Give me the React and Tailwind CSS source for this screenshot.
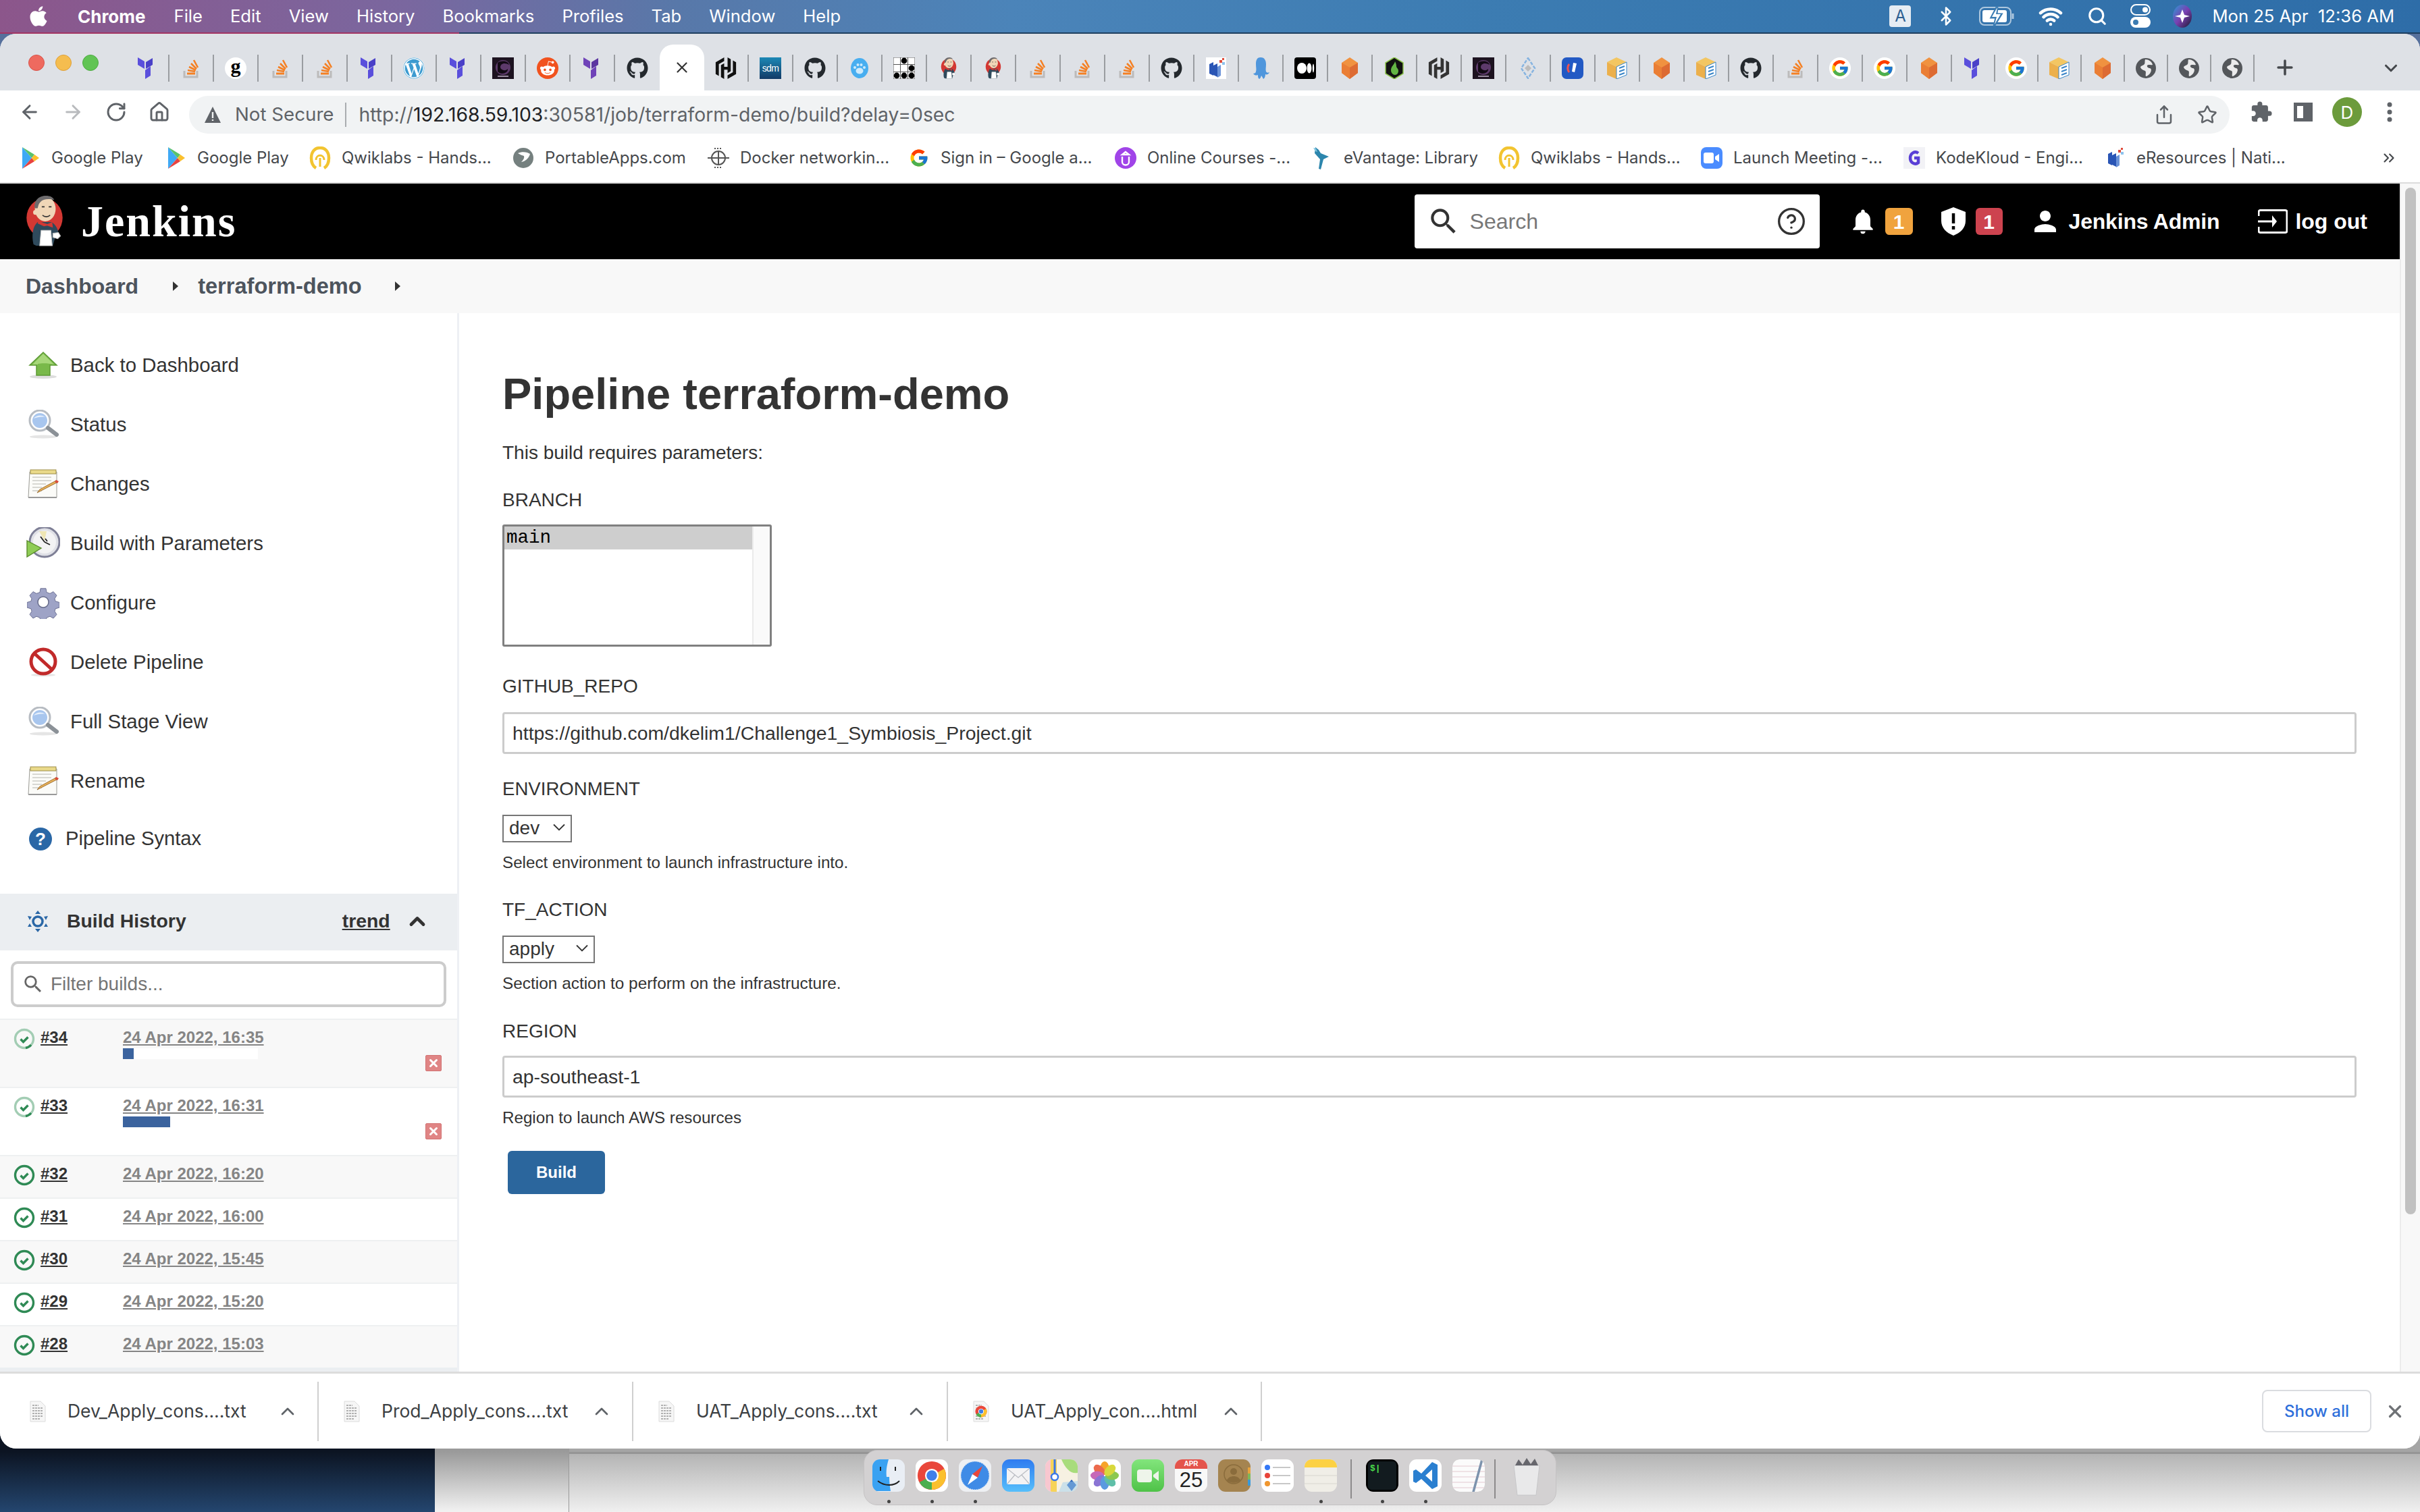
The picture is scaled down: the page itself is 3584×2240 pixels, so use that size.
import React from "react";
import { FaGithub, FaApple, FaWordpress, FaRedditAlien } from "react-icons/fa";
import { FcGoogle } from "react-icons/fc";
import { SiHashicorp } from "react-icons/si";
import { MdNotifications, MdPerson, MdSearch, MdExtension } from "react-icons/md";
import { ArrowLeft, ArrowRight, RotateCw, Home, Share, Star, Search, CircleHelp, Bluetooth, Wifi, X, Plus, ChevronDown, ChevronUp, ChevronsRight } from "lucide-react";

const Tf = ({ dark }) => (
  <svg width="32" height="32" viewBox="0 0 32 32">
    <g fill={dark ? "#6f43b8" : "#5a4fdc"}>
      <path d="M3 0l10 6v11L3 11z" />
      <path d="M15 7l10-6v10l-10 6z" fill={dark ? "#5c36a0" : "#4a40c8"} />
      <path d="M14 19l8-6v14l-8 5z" />
    </g>
  </svg>
);
const So = () => (
  <svg width="32" height="32" viewBox="0 0 32 32" fill="none">
    <path d="M6 20v9h19v-9" stroke="#bcbbbb" strokeWidth="3" />
    <path d="M10 24h12" stroke="#f48024" strokeWidth="3" />
    <path d="M11 19l11 2M13 14l10 5M16 9l8 8M20 4l6 11" stroke="#f48024" strokeWidth="2.6" />
  </svg>
);
const GLetter = () => (
  <div className="w-[32px] h-[32px] rounded-full bg-white flex items-center justify-center font-['Liberation_Serif',serif] font-bold text-[30px] leading-none text-black pb-[6px]">g</div>
);
const Wp = () => <div className="w-[32px] h-[32px] rounded-full bg-white flex items-center justify-center"><FaWordpress size={32} color="#3d9bd0" /></div>;
const DarkSq = () => (
  <svg width="32" height="32" viewBox="0 0 32 32">
    <rect width="32" height="32" fill="#1d1320" />
    <circle cx="16" cy="15" r="11" fill="#5d3a6b" />
    <path d="M8 8c6-4 15-3 17 3-5-3-12-3-13 3 0 5 8 7 11 3 1 6-10 10-15 4" fill="#120a14" />
    <rect x="8" y="27" width="16" height="2" fill="#9a8aa0" />
  </svg>
);
const Reddit = () => <div className="w-[32px] h-[32px] rounded-full bg-[#f1521e] flex items-center justify-center"><FaRedditAlien size={24} color="#fff" /></div>;
const Gh = () => <FaGithub size={32} color="#24292e" />;
const Hashi = ({ c = "#111" }) => <SiHashicorp size={32} color={c} />;
const Sdm = () => (
  <div className="w-[32px] h-[32px] bg-[linear-gradient(180deg,#1c88b5,#123a66)] flex items-center justify-center text-white text-[14px] font-['Liberation_Sans',sans-serif] leading-none tracking-tighter">sdm</div>
);
const Paw = () => (
  <svg width="32" height="32" viewBox="0 0 32 32">
    <ellipse cx="16" cy="16" rx="13" ry="15" fill="#48aef0" />
    <g fill="#cfeafb"><ellipse cx="16" cy="20" rx="5.5" ry="4.5" /><circle cx="9" cy="15" r="2" /><circle cx="13.5" cy="11" r="2" /><circle cx="18.5" cy="11" r="2" /><circle cx="23" cy="15" r="2" /></g>
  </svg>
);
const Dots = () => (
  <svg width="32" height="32" viewBox="0 0 32 32">
    <rect width="32" height="32" fill="#fff" stroke="#555" />
    <path d="M0 10.5h32M0 21.5h32M10.5 0v32M21.5 0v32" stroke="#555" strokeWidth="1" />
    <g fill="#000"><circle cx="16" cy="5" r="4.4" /><circle cx="27" cy="16" r="4.4" /><circle cx="5" cy="27" r="4.4" /><circle cx="16" cy="27" r="4.4" /><circle cx="27" cy="27" r="4.4" /></g>
  </svg>
);
const Jenk = ({ w = 26, h = 32 }) => (
  <svg width={w} height={h} viewBox="0 0 54 74">
    <ellipse cx="27" cy="32" rx="26" ry="28" fill="#d33833" />
    <path d="M11 70c-3-13-1-26 6-32l20 0c6 3 10 11 11 20l-6 3-3 11H15z" fill="#2f4a5c" />
    <ellipse cx="28" cy="19" rx="15" ry="18" fill="#f0d6b7" />
    <path d="M13 18C11 7 19 0 29 0c6 0 10 2 12 6-7-2-16-2-20 3-3 3-3 6-4 9z" fill="#6d6b6d" />
    <circle cx="14" cy="24" r="3.5" fill="#f0d6b7" />
    <path d="M23 16h4M33 16h4M24 28c3 3 8 3 11 0" stroke="#333" strokeWidth="1.6" fill="none" />
    <path d="M17 40l9 4 5-1 8 3-1-8-7 3-6-2-7-3z" fill="#d33833" />
    <path d="M22 50h14l2 22H20z" fill="#fff" stroke="#ccc" />
    <path d="M39 54l8-1 3 5-4 4-7-2z" fill="#fff" stroke="#bbb" />
  </svg>
);
const BlueDoc = () => (
  <svg width="32" height="32" viewBox="0 0 32 32">
    <rect x="1" width="30" height="32" fill="#fff" />
    <path d="M6 10l6-3v20l-6-3zM12 12l6-3v20l-6-3z" fill="#2a55b5" />
    <path d="M18 14l5-3v16l-5 3z" fill="#6b93d8" />
    <rect x="21" y="4" width="4" height="4" fill="#e04a3a" /><rect x="25" y="1" width="3" height="3" fill="#e04a3a" /><rect x="25" y="7" width="4" height="4" fill="#8cc3ee" />
  </svg>
);
const Octo = () => (
  <svg width="32" height="32" viewBox="0 0 32 32" fill="#4f96dc">
    <path d="M16 0c6 0 8 5 8 10 0 5-1 8 0 11 1 2 3 2 5 1-1 3-4 4-6 3 0 3-1 6-3 7-1-2-2-4-3-5-1 2-1 4-3 5-2-1-2-4-2-6-2 1-5 1-7-2 2 0 4-1 4-3 1-3 0-6 0-11C9 5 10 0 16 0z" />
  </svg>
);
const Med = () => (
  <svg width="32" height="32" viewBox="0 0 32 32">
    <rect width="32" height="32" rx="4" fill="#000" />
    <ellipse cx="11" cy="16" rx="7" ry="8" fill="#fff" /><ellipse cx="22" cy="16" rx="3.4" ry="7.5" fill="#fff" /><ellipse cx="28" cy="16" rx="1.2" ry="6.5" fill="#fff" />
  </svg>
);
const Hex = () => (
  <svg width="32" height="32" viewBox="0 0 32 32">
    <path d="M16 0l12 8v15L16 32 4 23V8z" fill="#f09240" />
    <path d="M16 15l12-7v15L16 32z" fill="#dd6b33" />
    <path d="M16 15L4 8v15l12 9z" fill="#ea7e35" />
  </svg>
);
const GreenHex = () => (
  <svg width="32" height="32" viewBox="0 0 32 32">
    <path d="M16 0l13 8v16L16 32 3 24V8z" fill="#111" stroke="#8bc34a" strokeWidth="1.5" />
    <path d="M17 6c-1 5-6 7-6 13 0 4 3 7 6 7 3 0 5-3 5-6 0-4-3-4-3-7 0-3-1-5-2-7z" fill="#63b544" />
  </svg>
);
const Diamond = () => (
  <svg width="32" height="32" viewBox="0 0 32 32" fill="none">
    <path d="M16 1l10 15-10 15L6 16z" stroke="#87b4e0" strokeWidth="2.5" strokeDasharray="5 2" />
    <path d="M16 11l5 5-5 5-5-5z" fill="#bcbcbc" />
  </svg>
);
const BlueSq = () => (
  <svg width="32" height="32" viewBox="0 0 32 32">
    <rect width="32" height="32" rx="7" fill="#2259c4" />
    <path d="M11 10c-3 3-3 9 0 12" stroke="#ef5350" strokeWidth="3" fill="none" />
    <path d="M17 8l5 1-3 13-4-1z" fill="#fff" />
  </svg>
);
const Box = () => (
  <svg width="32" height="32" viewBox="0 0 32 32">
    <path d="M15 0l15 7-15 7L1 7z" fill="#f3c662" />
    <path d="M1 7l14 7v18L1 26z" fill="#ecb04c" />
    <path d="M15 14l15-7v19l-15 6z" fill="#fff" stroke="#3a86c8" strokeWidth="1" />
    <path d="M19 16l8-3M19 21l8-3M19 26l8-3" stroke="#3a86c8" strokeWidth="2" />
  </svg>
);
const Globe = () => (
  <svg width="32" height="32" viewBox="0 0 32 32">
    <circle cx="16" cy="16" r="15" fill="#54575b" />
    <path d="M15 3c5 0 10 3 11 8-3 1-6-1-8 1-1 2 2 4 4 4 3 1 2 5 0 8-2 2-4 4-6 4-1-3 1-6-1-8-3-1-7-3-7-6 2-2 4-2 6-4 1-2 0-5 1-7z" fill="#f3f3f4" opacity=".95" />
  </svg>
);
const Gg = () => <div className="w-[32px] h-[32px] rounded-full bg-white flex items-center justify-center"><FcGoogle size={28} /></div>;

const tabs = [
  <Tf />, <So />, <GLetter />, <So />, <So />, <Tf />, <Wp />, <Tf />, <DarkSq />, <Reddit />, <Tf dark />, <Gh />, "active",
  <Hashi />, <Sdm />, <Gh />, <Paw />, <Dots />, <Jenk />, <Jenk />, <So />, <So />, <So />, <Gh />, <BlueDoc />, <Octo />, <Med />, <Hex />, <GreenHex />, <Hashi c="#333" />, <DarkSq />, <Diamond />, <BlueSq />, <Box />, <Hex />, <Box />, <Gh />, <So />, <Gg />, <Gg />, <Hex />, <Tf />, <Gg />, <Box />, <Hex />, <Globe />, <Globe />, <Globe />,
];

const GPlay = () => (
  <svg width="32" height="34" viewBox="0 0 32 34">
    <path d="M5 1v32l14-16z" fill="#3fa9f5" />
    <path d="M5 1l18 11-4 5z" fill="#5ac26b" />
    <path d="M5 33l18-11-4-5z" fill="#e8423f" />
    <path d="M23 12l7 5-7 5-4-5z" fill="#fbc02d" />
  </svg>
);
const Qwik = () => (
  <svg width="32" height="34" viewBox="0 0 32 34" fill="none">
    <path d="M10 32C5 29 3 24 3 17 3 8 8 2 16 2s13 6 13 15c0 7-2 12-7 15" stroke="#f2c430" strokeWidth="4.5" />
    <path d="M16 30V17M10 20c0-9 12-9 12 0" stroke="#f2c430" strokeWidth="3" />
  </svg>
);
const Portable = () => (
  <svg width="32" height="32" viewBox="0 0 32 32">
    <circle cx="16" cy="16" r="15" fill="#75807f" />
    <path d="M8 9c6-3 14-2 18 1-2 7-7 11-13 12 3-3 5-6 4-9-3-1-6-2-9-4z" fill="#fff" />
  </svg>
);
const Docker = () => (
  <svg width="32" height="32" viewBox="0 0 32 32" fill="none" stroke="#555" strokeWidth="2">
    <circle cx="16" cy="16" r="10" /><path d="M0 16h32M16 6v20" /><path d="M10 2h12M10 30h12" strokeDasharray="2 2" />
  </svg>
);
const GColor = () => <FcGoogle size={30} />;
const Udemy = () => (
  <svg width="32" height="32" viewBox="0 0 32 32" fill="none">
    <circle cx="16" cy="16" r="16" fill="#a044e8" />
    <path d="M11 14v8c0 6 10 6 10 0v-8M16 7l-5 4h10z" stroke="#fff" strokeWidth="2.4" />
  </svg>
);
const Bird = () => (
  <svg width="32" height="36" viewBox="0 0 32 36">
    <path d="M6 2l5 4 3 5 12 5-8 4-4 15-3-1 2-14-8-9z" fill="#2d86ad" />
    <path d="M3 3l4 1 2 5-3-1z" fill="#7ec5e0" />
  </svg>
);
const Zoom = () => (
  <div className="w-[32px] h-[32px] rounded-[8px] bg-[#4a8cff] flex items-center justify-center">
    <svg width="24" height="16" viewBox="0 0 24 16"><rect width="15" height="16" rx="3" fill="#fff" /><path d="M17 6l6-4v12l-6-4z" fill="#fff" /></svg>
  </div>
);
const Kode = () => (
  <svg width="32" height="32" viewBox="0 0 32 32" fill="none">
    <rect width="32" height="32" fill="#f2f2f6" />
    <path d="M22 9c-5-4-12 0-12 7s7 11 12 7v-7h-6" stroke="#5a3fd6" strokeWidth="4.5" />
  </svg>
);

const marks = [
  { t: "Google Play", i: <GPlay />, w: "w-[216px]" },
  { t: "Google Play", i: <GPlay />, w: "w-[214px]" },
  { t: "Qwiklabs - Hands...", i: <Qwik />, w: "w-[301px]" },
  { t: "PortableApps.com", i: <Portable />, w: "w-[289px]" },
  { t: "Docker networkin...", i: <Docker />, w: "w-[297px]" },
  { t: "Sign in – Google a...", i: <GColor />, w: "w-[306px]" },
  { t: "Online Courses -...", i: <Udemy />, w: "w-[291px]" },
  { t: "eVantage: Library", i: <Bird />, w: "w-[277px]" },
  { t: "Qwiklabs - Hands...", i: <Qwik />, w: "w-[300px]" },
  { t: "Launch Meeting -...", i: <Zoom />, w: "w-[300px]" },
  { t: "KodeKloud - Engi...", i: <Kode />, w: "w-[297px]" },
  { t: "eResources | Nati...", i: <BlueDoc />, w: "w-[409px]" },
];

const UpArrow = () => (
  <svg width="48" height="44" viewBox="0 0 48 44">
    <ellipse cx="24" cy="39" rx="20" ry="3" fill="#ddd" />
    <path d="M24 3l20 19H34v15H14V22H4z" fill="#79b94a" stroke="#5d9a35" strokeWidth="1.5" />
    <path d="M24 5L8 21h8v-1c6-1 16-1 24 1z" fill="#a7d77a" />
  </svg>
);
const Mag = () => (
  <svg width="48" height="44" viewBox="0 0 48 44">
    <ellipse cx="24" cy="40" rx="20" ry="2.5" fill="#e5e5e5" />
    <circle cx="19" cy="16" r="15" fill="#fff" stroke="#b7bcc2" strokeWidth="3" />
    <circle cx="19" cy="16" r="11" fill="#a8c6ee" />
    <path d="M10 13c3-5 12-6 17-2-5-1-12 0-17 2z" fill="#e7f0fb" />
    <path d="M31 27l13 10" stroke="#8b9197" strokeWidth="6" strokeLinecap="round" />
  </svg>
);
const Note = () => (
  <svg width="48" height="44" viewBox="0 0 48 44">
    <path d="M4 4h40v38H2z" fill="#fbfbf8" stroke="#9a9a94" strokeWidth="1" />
    <rect x="5" y="1" width="38" height="6" fill="#e9d98a" stroke="#8a7a30" strokeWidth=".8" />
    <path d="M8 12h28M8 17h28M8 22h20M8 27h14M8 32h14" stroke="#b5b5ae" strokeWidth="1" />
    <path d="M46 19l-27 14-4 2 4-5 24-13z" fill="#e8b25a" stroke="#8a5a20" strokeWidth=".8" />
    <path d="M43 16l4 2-2 3-4-2z" fill="#d94a3a" />
    <path d="M2 41h42v2H2z" fill="#999" />
  </svg>
);
const ClockPlay = () => (
  <svg width="50" height="48" viewBox="0 0 50 48">
    <circle cx="27" cy="22" r="22" fill="#dfe0e6" stroke="#7e7f96" strokeWidth="3" />
    <circle cx="27" cy="22" r="17" fill="#f3f3f4" />
    <path d="M19 6l8 14 3-14z" fill="#efe6b4" />
    <path d="M27 22l-6-8M27 22l8 4M31 21l-3-4" stroke="#222" strokeWidth="1.8" />
    <path d="M1 20l21 11L1 44z" fill="#8fcc55" stroke="#5a8c2c" strokeWidth="1.4" />
  </svg>
);
const Gear = () => (
  <svg width="48" height="48" viewBox="0 0 48 48">
    <path d="M20 2h8l1 6 5 2 5-3 5 6-3 5 1 4 6 2v8l-6 2-1 4 3 5-5 6-5-3-5 2-1 6h-8l-1-6-5-2-5 3-5-6 3-5-1-4-6-2v-8l6-2 1-4-3-5 5-6 5 3 5-2z" fill="#9ea3c6" stroke="#6c7193" strokeWidth="1" transform="scale(1 .94) translate(0 1)" />
    <circle cx="24" cy="23" r="8" fill="#fff" stroke="#666b8a" strokeWidth="1.5" />
  </svg>
);
const NoSign = () => (
  <svg width="46" height="44" viewBox="0 0 46 44" fill="none">
    <ellipse cx="23" cy="41" rx="18" ry="2.2" fill="#e5e5e5" />
    <circle cx="23" cy="21" r="18" fill="#fff" stroke="#c12a2a" strokeWidth="5" />
    <path d="M11 10l24 22" stroke="#c12a2a" strokeWidth="5" />
  </svg>
);
const HelpBlue = () => (
  <div className="w-[34px] h-[34px] rounded-full bg-[#2a67a6] flex items-center justify-center text-white font-bold text-[26px] leading-none">?</div>
);

const nav = [
  ["Back to Dashboard", <UpArrow />],
  ["Status", <Mag />],
  ["Changes", <Note />],
  ["Build with Parameters", <ClockPlay />],
  ["Configure", <Gear />],
  ["Delete Pipeline", <NoSign />],
  ["Full Stage View", <Mag />],
  ["Rename", <Note />],
];

const builds = [
  { n: "#34", d: "24 Apr 2022, 16:35", run: "w-[16px]", bg: "bg-[#f8f8f8]" },
  { n: "#33", d: "24 Apr 2022, 16:31", run: "w-[70px]", bg: "bg-white" },
  { n: "#32", d: "24 Apr 2022, 16:20", bg: "bg-[#f8f8f8]" },
  { n: "#31", d: "24 Apr 2022, 16:00", bg: "bg-white" },
  { n: "#30", d: "24 Apr 2022, 15:45", bg: "bg-[#f8f8f8]" },
  { n: "#29", d: "24 Apr 2022, 15:20", bg: "bg-white" },
  { n: "#28", d: "24 Apr 2022, 15:03", bg: "bg-[#f8f8f8]" },
];

const Status = ({ run }) => (
  <svg width="32" height="32" viewBox="0 0 32 32" fill="none">
    <circle cx="16" cy="16" r="13.5" stroke={run ? "#a3cdb4" : "#2f8a55"} strokeWidth="3.4" />
    {run && <path d="M26 25a13.5 13.5 0 0 1-8 4.5" stroke="#2f8a55" strokeWidth="3.4" />}
    <path d="M10.5 16.5l4 4 7-7" stroke="#2f8a55" strokeWidth="3.4" />
  </svg>
);

const Sel = ({ w, value }) => (
  <div className={`relative h-[41px] ${w}`}>
    <select defaultValue={value} className="appearance-none w-full h-full border-2 border-[#767676] bg-white pl-[8px] text-[28px] leading-none text-[#333] outline-none">
      <option value={value}>{value}</option>
    </select>
    <svg className="absolute right-[10px] top-[14px]" width="18" height="12" viewBox="0 0 18 12" fill="none"><path d="M1 1.5l8 8 8-8" stroke="#333" strokeWidth="1.8" /></svg>
  </div>
);

const Doc = () => (
  <svg width="24" height="32" viewBox="0 0 24 32">
    <path d="M1 1h15l7 7v23H1z" fill="#f6f6f6" stroke="#dcdcdc" />
    <path d="M4 7h9M4 11h16M4 15h16M4 19h16M4 23h16M4 27h12" stroke="#9b9b9b" strokeWidth="1.6" strokeDasharray="3 1" />
  </svg>
);
const ChromeMini = ({ s = 18 }) => (
  <svg width={s} height={s} viewBox="0 0 48 48">
    <circle cx="24" cy="24" r="23" fill="#e9473b" />
    <path d="M24 24L4 35A23 23 0 0 0 24 47z" fill="#4caf50" />
    <path d="M24 24l20-11A23 23 0 0 1 24 47z" fill="#fbc02d" />
    <circle cx="24" cy="24" r="11" fill="#fff" /><circle cx="24" cy="24" r="8.5" fill="#3f7fe8" />
  </svg>
);
const downloads = [
  { t: "Dev_Apply_cons....txt", i: <Doc />, w: "w-[472px]" },
  { t: "Prod_Apply_cons....txt", i: <Doc />, w: "w-[466px]" },
  { t: "UAT_Apply_cons....txt", i: <Doc />, w: "w-[466px]" },
  { t: "UAT_Apply_con....html", i: <div className="relative w-[24px] h-[32px]"><Doc /><div className="absolute left-[3px] top-[7px] rounded-full bg-white"><ChromeMini /></div></div>, w: "w-[465px]" },
];

const Tile = ({ children }) => <div className="w-[48px] h-[48px] rounded-[11px] overflow-hidden">{children}</div>;
const dockIcons = [
  { dot: true, el: <svg width="48" height="48" viewBox="0 0 48 48"><rect width="48" height="48" fill="#e9eef5" /><path d="M0 0h24c-3 10-4 18-3 26h4c0 8 1 15 2 21H0z" fill="#3aa2f2" /><path d="M12 11v6M34 11v6" stroke="#222" strokeWidth="2" /><path d="M8 32c10 8 24 8 32 0" stroke="#222" strokeWidth="2" fill="none" /></svg> },
  { dot: true, el: <div className="w-[48px] h-[48px] bg-white flex items-center justify-center"><ChromeMini s={44} /></div> },
  { dot: true, el: <svg width="48" height="48" viewBox="0 0 48 48"><rect width="48" height="48" fill="#eef0f3" /><circle cx="24" cy="24" r="21" fill="#3f8be6" /><circle cx="24" cy="24" r="21" fill="none" stroke="#cfe2f7" strokeWidth="1.5" strokeDasharray="1 2" /><path d="M35 10L20 22l8 5z" fill="#e9473b" /><path d="M13 38l15-11-8-5z" fill="#fff" /></svg> },
  { el: <svg width="48" height="48" viewBox="0 0 48 48"><defs><linearGradient id="mailg" x1="0" y1="0" x2="0" y2="1"><stop offset="0" stopColor="#2f7bf0" /><stop offset="1" stopColor="#57bffb" /></linearGradient></defs><rect width="48" height="48" fill="url(#mailg)" /><rect x="7" y="13" width="34" height="24" rx="2" fill="#f3f3f4" /><path d="M8 14l16 13 16-13M8 36l11-13M40 36L29 23" stroke="#b9bcc2" strokeWidth="1.2" fill="none" /></svg> },
  { el: <svg width="48" height="48" viewBox="0 0 48 48"><rect width="48" height="48" fill="#f6f1e2" /><path d="M24 0h24v20C38 22 30 14 24 0z" fill="#a8dc7c" /><path d="M0 0h8v48H0z" fill="#f8c7cf" /><path d="M8 0h9v48H8z" fill="#f7d358" /><circle cx="14" cy="26" r="5" fill="#fff" stroke="#3a78e8" strokeWidth="2.5" /><path d="M14 0v20" stroke="#3a78e8" strokeWidth="3" /><path d="M32 38l7-8 7 8-7 9z" fill="#2a62b8" /><path d="M20 48l6-14 22-2v16z" fill="#9fd0ef" opacity=".5" /></svg> },
  { el: <svg width="48" height="48" viewBox="0 0 48 48"><rect width="48" height="48" fill="#fff" /><g style={{ mixBlendMode: "multiply" }}><ellipse cx="24" cy="13" rx="6.5" ry="10" fill="#f6a32a" /><ellipse cx="24" cy="13" rx="6.5" ry="10" fill="#ec6a4d" transform="rotate(-45 24 24)" /><ellipse cx="24" cy="13" rx="6.5" ry="10" fill="#c668b8" transform="rotate(-90 24 24)" /><ellipse cx="24" cy="13" rx="6.5" ry="10" fill="#8a74d4" transform="rotate(-135 24 24)" /><ellipse cx="24" cy="13" rx="6.5" ry="10" fill="#5a9ae0" transform="rotate(180 24 24)" /><ellipse cx="24" cy="13" rx="6.5" ry="10" fill="#5fbfa8" transform="rotate(135 24 24)" /><ellipse cx="24" cy="13" rx="6.5" ry="10" fill="#8cc850" transform="rotate(90 24 24)" /><ellipse cx="24" cy="13" rx="6.5" ry="10" fill="#d8d83c" transform="rotate(45 24 24)" /></g></svg> },
  { el: <svg width="48" height="48" viewBox="0 0 48 48"><defs><linearGradient id="ftg" x1="0" y1="0" x2="0" y2="1"><stop offset="0" stopColor="#82e57c" /><stop offset="1" stopColor="#4fc248" /></linearGradient></defs><rect width="48" height="48" fill="url(#ftg)" /><rect x="8" y="15" width="22" height="19" rx="4" fill="#eef5ea" /><path d="M32 23l8-6v15l-8-6z" fill="#eef5ea" /></svg> },
  { el: <div className="w-[48px] h-[48px] bg-[#f8f8f8] flex flex-col items-center font-['Liberation_Sans',sans-serif]"><div className="w-full h-[14px] bg-[#e4544c] text-white text-[10px] font-bold leading-[14px] text-center">APR</div><div className="text-[31px] leading-[34px] text-[#222]">25</div></div> },
  { el: <svg width="48" height="48" viewBox="0 0 48 48"><rect width="48" height="48" fill="#a58450" /><rect x="44" y="12" width="4" height="9" fill="#e8a33d" /><rect x="44" y="21" width="4" height="9" fill="#7fb85a" /><rect x="44" y="30" width="4" height="9" fill="#3a9ad9" /><circle cx="23" cy="22" r="14" fill="none" stroke="#8a6c3c" strokeWidth="1.5" /><circle cx="23" cy="18" r="5" fill="#8a6c3c" /><path d="M13 31c3-8 17-8 20 0-5 5-15 5-20 0z" fill="#8a6c3c" /></svg> },
  { el: <svg width="48" height="48" viewBox="0 0 48 48"><rect width="48" height="48" fill="#fff" /><circle cx="9" cy="12" r="4" fill="#3478f6" /><circle cx="9" cy="24" r="4" fill="#e8443a" /><circle cx="9" cy="36" r="4" fill="#f0962e" /><path d="M17 12h26M17 24h26M17 36h26" stroke="#c8c8c8" strokeWidth="2" /></svg> },
  { dot: true, el: <svg width="48" height="48" viewBox="0 0 48 48"><rect width="48" height="48" fill="#f0eee7" /><rect width="48" height="12" fill="#fcd144" /><path d="M0 24h48M0 36h48" stroke="#d8d6cf" strokeWidth="1" /></svg> },
];
const dockIcons2 = [
  { dot: true, el: <div className="w-[48px] h-[48px] rounded-[8px] bg-black p-[3px]"><div className="w-full h-full rounded-[5px] bg-[#121b1f] pl-[3px] pt-[4px] text-[#4ade4a] text-[13px] font-bold leading-none font-['Liberation_Mono',monospace]">$|</div></div> },
  { dot: true, el: <svg width="48" height="48" viewBox="0 0 48 48"><rect width="48" height="48" fill="#fff" /><path d="M34 4l8 4v32l-8 4-16-15-8 6-4-2V17l4-2 8 6zM34 15L24 24l10 9z" fill="#2a7fd0" /></svg> },
  { el: <svg width="48" height="52" viewBox="0 0 48 52"><rect width="48" height="48" rx="10" fill="#fbfbfb" /><path d="M0 10h48M0 18h48M0 26h48M0 34h48M0 42h48" stroke="#e3c9d0" strokeWidth="1" /><path d="M44 0L30 52" stroke="#7d93ad" strokeWidth="3.5" /></svg> },
];

export default function App() {
  return (
    <div className="relative w-[3584px] h-[2240px] overflow-hidden flex flex-col bg-[#56709c] font-['Liberation_Sans',Arial,sans-serif]">
      {/* macOS menu bar */}
      <div className="h-[50px] shrink-0 flex flex-col bg-[linear-gradient(90deg,#8c568b_0,#7a679f_600px,#5878a9_1000px,#4b84b9_1500px,#3c7cb2_2200px,#2e6da8_100%)]">
        <div className="h-[48px] flex items-center font-['Inter',sans-serif] text-white text-[25.6px]">
          <FaApple size={34} color="#fff" className="ml-[40px] mr-[41px]" />
          <span className="font-bold mr-[42px] text-[26px]">Chrome</span>
          <div className="flex gap-[41px]">
            {["File", "Edit", "View", "History", "Bookmarks", "Profiles", "Tab", "Window", "Help"].map((m) => <span key={m}>{m}</span>)}
          </div>
          <div className="ml-auto flex items-center pr-[38px]">
            <div className="w-[32px] h-[32px] rounded-[4px] bg-[#e6ecf3] text-[#2d5f92] flex items-center justify-center text-[24px]">A</div>
            <Bluetooth size={30} className="ml-[37px]" />
            <svg className="ml-[34px]" width="54" height="30" viewBox="0 0 54 30" fill="none"><rect x="1" y="2" width="46" height="26" rx="7" stroke="#fff" strokeOpacity=".6" strokeWidth="2" /><rect x="5" y="6" width="36" height="18" rx="3" fill="#fff" /><path d="M27 0l-9 17h7l-3 13 11-18h-7z" fill="#3c7cb2" stroke="#3c7cb2" strokeWidth="3" /><path d="M27 2l-8 14h7l-3 11 9-15h-7z" fill="#fff" /><path d="M50 11v8" stroke="#fff" strokeOpacity=".6" strokeWidth="3" /></svg>
            <Wifi size={36} strokeWidth={3} className="ml-[34px]" />
            <Search size={30} strokeWidth={2.5} className="ml-[36px]" />
            <svg className="ml-[34px]" width="30" height="36" viewBox="0 0 30 36"><rect x="1" y="1" width="28" height="15" rx="7.5" fill="none" stroke="#fff" strokeWidth="2" /><circle cx="22" cy="8.5" r="4" fill="#fff" /><rect y="19" width="30" height="16" rx="8" fill="#fff" /><circle cx="8" cy="27" r="4" fill="#3c7cb2" /></svg>
            <svg className="ml-[32px]" width="30" height="36" viewBox="0 0 30 36"><defs><linearGradient id="sirig" x1="0" y1="0" x2="1" y2="1"><stop offset="0" stopColor="#2d9bd8" /><stop offset=".5" stopColor="#7a3fb0" /><stop offset="1" stopColor="#1a1a2e" /></linearGradient></defs><ellipse cx="15" cy="18" rx="14" ry="17" fill="url(#sirig)" /><path d="M15 8l3 8 8 2-8 2-3 8-3-8-8-2 8-2z" fill="#fff" /></svg>
            <span className="ml-[29px] whitespace-pre">Mon 25 Apr  12:36 AM</span>
          </div>
        </div>
        <div className="h-[2px] bg-[linear-gradient(90deg,#a33563_0,#a33563_680px,#1f3f5f_680px,#1f3f5f_100%)]" />
      </div>

      {/* Browser window */}
      <div className="relative z-10 h-[2096px] shrink-0 -mb-[24px] rounded-[24px] overflow-hidden bg-white flex flex-col">
        {/* Tab strip */}
        <div className="h-[84px] shrink-0 bg-[#dee1e6] flex">
          <div className="w-[185px] shrink-0 pl-[42px] pt-[31px] flex gap-[16px]">
            <div className="w-[24px] h-[24px] rounded-full bg-[#ee6a5f] border border-[#d9534a]" />
            <div className="w-[24px] h-[24px] rounded-full bg-[#f5bd4f] border border-[#dea03a]" />
            <div className="w-[24px] h-[24px] rounded-full bg-[#61c454] border border-[#4eab43]" />
          </div>
          {tabs.map((t, i) => t === "active" ? (
            <div key={i} className="w-[66px] shrink-0 mt-[16px] rounded-t-[20px] bg-white flex items-center justify-center">
              <X size={26} color="#333" />
            </div>
          ) : (
            <div key={i} className={`shrink-0 pt-[31px] ${i >= 41 ? "w-[64px]" : "w-[66px]"}`}>
              <div className={`h-[40px] flex items-center justify-center ${i === 11 ? "" : "border-r-2 border-[#9a9da1]"}`}>{t}</div>
            </div>
          ))}
          <Plus size={34} color="#45484c" strokeWidth={2.5} className="ml-[28px] mt-[33px]" />
          <ChevronDown size={30} color="#45484c" strokeWidth={2.5} className="ml-[125px] mt-[36px]" />
        </div>

        {/* Toolbar */}
        <div className="h-[64px] shrink-0 bg-white flex items-end">
          <div className="w-[280px] h-[64px] flex items-center shrink-0 pl-[28px] gap-[32px]">
            <ArrowLeft size={32} color="#5f6368" strokeWidth={2.2} />
            <ArrowRight size={32} color="#b9bbbe" strokeWidth={2.2} />
            <RotateCw size={32} color="#5f6368" strokeWidth={2.2} />
            <Home size={32} color="#5f6368" strokeWidth={2.2} />
          </div>
          <div className="w-[3022px] h-[56px] rounded-full bg-[#f1f3f4] flex items-center pl-[22px] pr-[18px] font-['Inter',sans-serif] text-[27.7px] text-[#5f6368]">
            <svg width="26" height="26" viewBox="0 0 26 26"><path d="M13 1l12 24H1z" fill="#5f6368" /><path d="M13 9v9M13 20v2" stroke="#f1f3f4" strokeWidth="2.4" /></svg>
            <span className="ml-[20px] mr-[16px]">Not Secure</span>
            <div className="w-[2px] h-[36px] bg-[#a9acb0]" />
            <span className="ml-[19px] text-[28.3px]">http://<span className="text-[#202124]">192.168.59.103</span>:30581/job/terraform-demo/build?delay=0sec</span>
            <Share size={30} className="ml-auto" strokeWidth={2} />
            <Star size={30} className="ml-[34px]" strokeWidth={2} />
          </div>
          <div className="h-[64px] flex items-center flex-1 pl-[30px]">
            <MdExtension size={34} color="#5f6368" />
            <svg className="ml-[30px]" width="30" height="30" viewBox="0 0 30 30"><path d="M1 1h28v28H1z" fill="#5f6368" /><path d="M6 6h9v18H6z" fill="#fff" /></svg>
            <div className="ml-[28px] w-[44px] h-[44px] rounded-full bg-[#6c9b3c] text-white flex items-center justify-center text-[26px] font-['Inter',sans-serif]">D</div>
            <svg className="ml-[37px]" width="8" height="30" viewBox="0 0 8 30"><circle cx="4" cy="4" r="3.5" fill="#5f6368" /><circle cx="4" cy="15" r="3.5" fill="#5f6368" /><circle cx="4" cy="26" r="3.5" fill="#5f6368" /></svg>
          </div>
        </div>

        {/* Bookmarks */}
        <div className="h-[72px] shrink-0 bg-white flex items-center pl-[28px] font-['Inter',sans-serif] text-[24px] text-[#45484c]">
          {marks.map((m, i) => (
            <div key={i} className={`${m.w} shrink-0 flex items-center gap-[16px]`}>
              <div className="w-[32px] h-[36px] flex items-center justify-center">{m.i}</div>
              <span className="whitespace-nowrap">{m.t}</span>
            </div>
          ))}
          <ChevronsRight size={26} color="#45484c" />
        </div>
        <div className="h-[2px] shrink-0 bg-[#dcdcdc]" />

        {/* Page + scrollbar */}
        <div className="h-[1760px] shrink-0 flex">
          <div className="w-[3554px] shrink-0 flex flex-col text-[#333]">
            {/* Jenkins header */}
            <div className="h-[112px] shrink-0 bg-black flex items-center text-white">
              <div className="ml-[38px] flex"><Jenk w={56} h={76} /></div>
              <span className="ml-[26px] font-['Liberation_Serif',serif] font-bold text-[66px] tracking-[2px] leading-none">Jenkins</span>
              <div className="ml-auto w-[600px] h-[80px] bg-white rounded-[4px] flex items-center pl-[18px] pr-[20px] text-[#777]">
                <MdSearch size={50} color="#333" />
                <span className="ml-[14px] text-[32px]">Search</span>
                <CircleHelp size={44} color="#333" strokeWidth={1.8} className="ml-auto" />
              </div>
              <MdNotifications size={44} color="#fff" className="ml-[42px]" />
              <div className="ml-[11px] w-[41px] h-[40px] rounded-[6px] bg-[#f0a33e] text-white font-bold text-[30px] flex items-center justify-center">1</div>
              <svg className="ml-[38px]" width="44" height="44" viewBox="0 0 44 44"><path d="M22 1l18 7v13c0 11-8 18-18 22C12 39 4 32 4 21V8z" fill="#fff" /><path d="M22 10v15M22 29v5" stroke="#000" strokeWidth="4.5" /></svg>
              <div className="ml-[11px] w-[40px] h-[40px] rounded-[6px] bg-[#cd434f] text-white font-bold text-[30px] flex items-center justify-center">1</div>
              <MdPerson size={48} color="#fff" className="ml-[39px]" />
              <span className="ml-[11px] text-[32px] font-bold tracking-[-0.2px]">Jenkins Admin</span>
              <svg className="ml-[57px]" width="44" height="36" viewBox="0 0 44 36" fill="none" stroke="#fff" strokeWidth="3"><path d="M1 10V4a2.5 2.5 0 0 1 2.5-2.5h37A2.5 2.5 0 0 1 43 4v28a2.5 2.5 0 0 1-2.5 2.5h-37A2.5 2.5 0 0 1 1 32v-6" /><path d="M0 18h27" /><path d="M21 9l7 9-7 9" strokeWidth="3" fill="#fff" stroke="none" /></svg>
              <span className="ml-[11px] mr-[48px] text-[32px] font-bold">log out</span>
            </div>
            {/* Breadcrumb */}
            <div className="h-[80px] shrink-0 bg-[#f8f8f8] flex items-center text-[32px] font-bold text-[#4d545d]">
              <span className="ml-[38px]">Dashboard</span>
              <svg className="ml-[50px]" width="10" height="16" viewBox="0 0 10 16"><path d="M1 1l8 7-8 7z" fill="#333" /></svg>
              <span className="ml-[28px] text-[32.6px]">terraform-demo</span>
              <svg className="ml-[48px]" width="10" height="16" viewBox="0 0 10 16"><path d="M1 1l8 7-8 7z" fill="#333" /></svg>
            </div>
            <div className="flex-1 flex min-h-0">
              {/* Sidebar */}
              <div className="w-[680px] shrink-0 border-r-[3px] border-[#eef0f4] flex flex-col">
                <div className="pt-[33px] flex flex-col">
                  {nav.map(([t, i]) => (
                    <div key={t} className="h-[88px] flex items-center pl-[39px] gap-[15px] text-[29.4px] text-[#333]">
                      <div className="w-[50px] flex justify-center">{i}</div>
                      <span>{t}</span>
                    </div>
                  ))}
                  <div className="h-[84px] flex items-center pl-[43px] gap-[20px] text-[29.2px] text-[#333]">
                    <HelpBlue />
                    <span>Pipeline Syntax</span>
                  </div>
                </div>
                <div className="mt-[39px] h-[84px] shrink-0 pb-[3px] bg-[#ebeef1] flex items-center text-[28.4px] font-bold text-[#333]">
                  <svg className="ml-[40px]" width="32" height="32" viewBox="0 0 32 32" fill="none"><circle cx="16" cy="16" r="7" stroke="#2a67a6" strokeWidth="3.5" /><g fill="#2a67a6"><path d="M16 0l4 5h-8zM16 32l-4-5h8zM1 8l6 1-3 5zM31 8l-3 6-3-5zM1 24l3-5 3 5zM31 24l-6 0 3-5z" /></g></svg>
                  <span className="ml-[27px]">Build History</span>
                  <a className="ml-[231px] underline">trend</a>
                  <ChevronUp size={36} strokeWidth={3.2} className="ml-[22px]" />
                </div>
                <div className="h-[101px] shrink-0 px-[16px] pt-[16px]">
                  <div className="h-[68px] border-[4px] border-[#ccc] rounded-[10px] flex items-center pl-[12px] gap-[9px] text-[28px] text-[#757575]">
                    <MdSearch size={34} color="#666" />
                    <span>Filter builds...</span>
                  </div>
                </div>
                <div className="flex-1 bg-[#ebeef1] flex flex-col">
                  {builds.map((b) => (
                    <div key={b.n} className={`${b.bg} shrink-0 border-t-2 border-[#eef0f1] flex pl-[20px] pr-[23px] ${b.run ? "h-[101px] pt-[12px]" : "h-[63px] pt-[12px]"}`}>
                      <Status run={!!b.run} />
                      <a className="ml-[8px] w-[122px] text-[24px] font-bold underline leading-[28px] text-[#333]">{b.n}</a>
                      <div className="flex-1 flex flex-col">
                        <a className="text-[24px] font-bold underline leading-[28px] text-[#858585]">{b.d}</a>
                        {b.run && <div className="w-[200px] h-[16px] bg-white mt-[2px]"><div className={`${b.run} h-full bg-[#3b639e]`} /></div>}
                      </div>
                      {b.run && (
                        <div className="w-[24px] h-[24px] mt-[40px] rounded-[2px] bg-[#e08585] border border-[#d27272] flex items-center justify-center">
                          <X size={18} color="#fff" strokeWidth={4} />
                        </div>
                      )}
                    </div>
                  ))}
                </div>
              </div>
              {/* Main */}
              <div className="flex-1 pl-[64px] pr-[64px] pt-[84px] flex flex-col items-stretch text-[28px] text-[#333]">
                <h1 className="h-[72px] text-[65px] leading-[72px] font-bold">Pipeline terraform-demo</h1>
                <p className="mt-[31px] h-[40px] leading-[40px]">This build requires parameters:</p>
                <div className="mt-[30px] h-[40px] leading-[40px]">BRANCH</div>
                <div className="mt-[16px] w-[399px] h-[181px] border-[3px] border-[#808080] rounded-[3px] flex bg-white overflow-hidden">
                  <div className="w-[367px]">
                    <div className="h-[34px] bg-[#cecece] pl-[3px] font-['Liberation_Mono',monospace] text-[27.5px] leading-[34px] text-black">main</div>
                  </div>
                  <div className="flex-1 bg-[#fafafa] border-l-2 border-[#ebebeb]" />
                </div>
                <div className="mt-[39px] h-[40px] leading-[40px]">GITHUB_REPO</div>
                <input readOnly value="https://github.com/dkelim1/Challenge1_Symbiosis_Project.git" className="mt-[18px] h-[62px] border-[3px] border-[#ccc] rounded-[4px] px-[12px] text-[28.4px] text-[#333] outline-none" />
                <div className="mt-[32px] h-[40px] leading-[40px] text-[27.6px]">ENVIRONMENT</div>
                <div className="mt-[17px]"><Sel w="w-[103px]" value="dev" /></div>
                <div className="mt-[11px] h-[40px] leading-[40px] text-[24.2px]">Select environment to launch infrastructure into.</div>
                <div className="mt-[30px] h-[40px] leading-[40px]">TF_ACTION</div>
                <div className="mt-[17px]"><Sel w="w-[137px]" value="apply" /></div>
                <div className="mt-[11px] h-[40px] leading-[40px] text-[24.4px]">Section action to perform on the infrastructure.</div>
                <div className="mt-[31px] h-[40px] leading-[40px]">REGION</div>
                <input readOnly value="ap-southeast-1" className="mt-[16px] h-[62px] border-[3px] border-[#ccc] rounded-[4px] px-[12px] text-[28.4px] text-[#333] outline-none" />
                <div className="mt-[10px] h-[40px] leading-[40px] text-[24.2px]">Region to launch AWS resources</div>
                <button className="mt-[29px] ml-[8px] w-[144px] h-[64px] rounded-[6px] bg-[#2b669d] text-white font-bold text-[24px]">Build</button>
              </div>
            </div>
          </div>
          <div className="flex-1 bg-[#f8f8f8] border-l-2 border-[#ececec] pl-[6px] pt-[6px]">
            <div className="w-[16px] h-[1521px] rounded-full bg-[#c1c1c1]" />
          </div>
        </div>

        {/* Downloads bar */}
        <div className="h-[3px] shrink-0 bg-[#dcdcdc]" />
        <div className="flex-1 bg-white flex items-center font-['Inter',sans-serif] text-[26.5px] text-[#3c4043]">
          {downloads.map((d, i) => (
            <div key={i} className={`${d.w} shrink-0 h-[88px] flex items-center border-r-2 border-[#cfcfcf] ${i === 0 ? "pl-[44px]" : "pl-[37px]"}`}>
              {d.i}
              <span className="w-[276px] ml-[32px] whitespace-nowrap">{d.t}</span>
              <ChevronUp size={32} color="#5f6368" strokeWidth={2} className="ml-[34px]" />
            </div>
          ))}
          <div className="ml-auto w-[162px] h-[63px] border-2 border-[#dadce0] rounded-[8px] flex items-center justify-center text-[24px] text-[#2e6fdb] font-medium">Show all</div>
          <X size={30} color="#6f7276" strokeWidth={2.6} className="ml-[20px] mr-[22px]" />
        </div>
      </div>

      {/* Desktop behind the window */}
      <div className="flex-1 flex min-h-0">
        <div className="w-[644px] bg-[linear-gradient(180deg,#0c1422_24%,#24466f_100%)]" />
        <div className="w-[198px] bg-[linear-gradient(180deg,#9a9a9a_24%,#f2f2f2_100%)]" />
        <div className="flex-1 border-l border-[#999] bg-[linear-gradient(180deg,#a5a5a5_0,#a5a5a5_29px,#959595_29px,#959595_32px,#b4b4b4_32px,#f0f0f0_100%)]" />
      </div>

      {/* Dock */}
      <div className="absolute z-20 left-[1279px] top-[2148px] w-[1026px] h-[82px] rounded-[20px] bg-[#d3d1d2] border border-[#c4c2c3] flex items-start pt-[13px] pl-[4px]">
        {dockIcons.map((d, i) => (
          <div key={i} className="w-[64px] flex flex-col items-center shrink-0">
            <div className="w-[48px] h-[48px]"><Tile>{d.el}</Tile></div>
            {d.dot && <div className="mt-[12px] w-[5px] h-[5px] rounded-full bg-[#444]" />}
          </div>
        ))}
        <div className="ml-[12px] w-[2px] h-[58px] bg-[#8c8a8b]" />
        <div className="ml-[13px] flex">
          {dockIcons2.map((d, i) => (
            <div key={i} className="w-[64px] flex flex-col items-center shrink-0">
              <div className="w-[48px] h-[48px]"><Tile>{d.el}</Tile></div>
              {d.dot && <div className="mt-[12px] w-[5px] h-[5px] rounded-full bg-[#444]" />}
            </div>
          ))}
        </div>
        <div className="ml-[6px] w-[2px] h-[58px] bg-[#8c8a8b]" />
        <svg className="ml-[24px] -mt-[3px]" width="44" height="58" viewBox="0 0 44 58"><path d="M3 12h38l-5 44H8z" fill="#e9e9ea" stroke="#c6c6c8" /><path d="M5 12l5-9 6 8 6-10 6 9 6-8 5 10z" fill="#66666c" /></svg>
      </div>
    </div>
  );
}
